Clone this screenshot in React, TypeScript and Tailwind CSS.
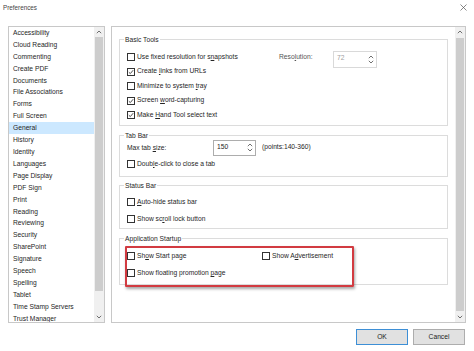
import { ReactNode } from "react";

const categories = [
  "Accessibility",
  "Cloud Reading",
  "Commenting",
  "Create PDF",
  "Documents",
  "File Associations",
  "Forms",
  "Full Screen",
  "General",
  "History",
  "Identity",
  "Languages",
  "Page Display",
  "PDF Sign",
  "Print",
  "Reading",
  "Reviewing",
  "Security",
  "SharePoint",
  "Signature",
  "Speech",
  "Spelling",
  "Tablet",
  "Time Stamp Servers",
  "Trust Manager",
];

function Chevron({ up }: { up?: boolean }) {
  return (
    <svg width="6" height="4" viewBox="0 0 6 4" className="block">
      <path
        d={up ? "M0.8 3.2 L3 1 L5.2 3.2" : "M0.8 0.8 L3 3 L5.2 0.8"}
        fill="none"
        stroke="#606060"
        strokeWidth="0.9"
      />
    </svg>
  );
}

function CheckBox({ checked }: { checked?: boolean }) {
  return (
    <span className="flex h-[8px] w-[8px] shrink-0 items-center justify-center border border-[#333] bg-white">
      {checked && (
        <svg width="6" height="6" viewBox="0 0 6 6">
          <path d="M0.8 3.2 L2.3 4.6 L5.2 1.2" fill="none" stroke="#222" strokeWidth="0.8" />
        </svg>
      )}
    </span>
  );
}

function Option({ checked, children }: { checked?: boolean; children: ReactNode }) {
  return (
    <div className="flex h-[12px] items-center gap-[2px]">
      <CheckBox checked={checked} />
      <span className="whitespace-nowrap">{children}</span>
    </div>
  );
}

function ScrollBar({ before, thumb }: { before: number; thumb: number }) {
  return (
    <div className="flex w-[10px] shrink-0 flex-col bg-[#f0f0f0]">
      <div className="flex h-[10px] items-center justify-center">
        <Chevron up />
      </div>
      <div className="flex flex-1 flex-col">
        <div style={{ height: before }} />
        <div className="mx-[1px] bg-[#cdcdcd]" style={{ height: thumb }} />
      </div>
      <div className="flex h-[10px] items-center justify-center">
        <Chevron />
      </div>
    </div>
  );
}

function GroupBox({ title, className, children }: { title: string; className: string; children?: ReactNode }) {
  return (
    <div className={`relative shrink-0 border border-[#dcdcdc] ${className}`}>
      <span className="absolute -top-[5px] left-[4px] bg-white px-[1px] leading-[9px]">{title}</span>
      {children}
    </div>
  );
}

function SpinBox({ value, disabled, className }: { value: string; disabled?: boolean; className: string }) {
  return (
    <div className={`flex shrink-0 justify-between border bg-white pl-[3px] pr-[2px] ${className}`}>
      <span className={`pt-[1px] leading-[9px] ${disabled ? "text-[#a0a0a0]" : "text-[#222]"}`}>{value}</span>
      <div className="flex flex-col justify-center gap-[1px]">
        <Chevron up />
        <Chevron />
      </div>
    </div>
  );
}

export default function App() {
  return (
    <div className="flex h-[351px] w-[474px] flex-col bg-white font-['Liberation_Sans',Arial,sans-serif] text-[6.7px] text-[#262626]">
      <div className="flex h-[26px] items-start justify-between pl-[3px] pr-[7px] pt-[3px]">
        <span className="text-[6.3px] leading-[9px] text-[#444]">Preferences</span>
        <svg width="7" height="7" viewBox="0 0 7 7" className="mt-[1px]">
          <path d="M0.5 0.5 L6.5 6.5 M6.5 0.5 L0.5 6.5" stroke="#555" strokeWidth="0.7" />
        </svg>
      </div>

      <div className="flex h-[297px] gap-[6px] pl-[8px] pr-[8px]">
        <div className="flex w-[97px] shrink-0 border border-[#c8c8c8]">
          <ul className="flex-1 overflow-hidden">
            {categories.map((c) => (
              <li
                key={c}
                className={`flex h-[11.92px] items-center whitespace-nowrap pl-[4px] ${c === "General" ? "bg-[#cce8ff]" : ""}`}
              >
                {c}
              </li>
            ))}
          </ul>
          <ScrollBar before={0} thumb={254} />
        </div>

        <div className="flex flex-1 border border-[#c8c8c8]">
          <div className="flex flex-1 flex-col pl-[7px] pr-[7px] pt-[12px]">
            <GroupBox title="Basic Tools" className="h-[87px]">
              <div className="flex flex-col gap-[2.5px] pl-[7px] pt-[11px]">
                <div className="flex h-[12px] items-center">
                  <div className="w-[152px]">
                    <Option>
                      Use fixed resolution for s<u>n</u>apshots
                    </Option>
                  </div>
                  <span className="w-[54px] text-[#555]">
                    Reso<u>l</u>ution:
                  </span>
                  <SpinBox value="72" disabled className="mt-[5px] h-[17px] w-[44px] border-[#d9d9d9]" />
                </div>
                <Option checked>
                  Create <u>l</u>inks from URLs
                </Option>
                <Option>
                  Minimize to system <u>t</u>ray
                </Option>
                <Option checked>
                  Screen <u>w</u>ord-capturing
                </Option>
                <Option checked>
                  Make <u>H</u>and Tool select text
                </Option>
              </div>
            </GroupBox>

            <GroupBox title="Tab Bar" className="mt-[9px] h-[42px]">
              <div className="flex flex-col pl-[7px] pt-[4px]">
                <div className="flex h-[15px] items-center">
                  <span className="w-[86px] pt-[2px]">
                    Max tab <u>s</u>ize:
                  </span>
                  <SpinBox value="150" className="h-[16px] w-[43px] border-[#adadad]" />
                  <span className="pl-[6px]">(points:140-360)</span>
                </div>
                <div className="mt-[3px]">
                  <Option>
                    Doub<u>l</u>e-click to close a tab
                  </Option>
                </div>
              </div>
            </GroupBox>

            <GroupBox title="Status Bar" className="mt-[8px] h-[44px]">
              <div className="flex flex-col gap-[5px] pl-[7px] pt-[10px]">
                <Option>
                  <u>A</u>uto-hide status bar
                </Option>
                <Option>
                  Show sc<u>r</u>oll lock button
                </Option>
              </div>
            </GroupBox>

            <GroupBox title="Application Startup" className="mt-[9px] h-[47px]">
              <div className="flex flex-col gap-[5px] pl-[7px] pt-[11px]">
                <div className="flex">
                  <div className="w-[135px]">
                    <Option>
                      Sh<u>o</u>w Start page
                    </Option>
                  </div>
                  <Option>
                    Show A<u>d</u>vertisement
                  </Option>
                </div>
                <Option>
                  Show floating promotion <u>p</u>age
                </Option>
              </div>
              <div className="absolute left-[5px] top-[7px] h-[41px] w-[229px] rounded-[1px] border-2 border-[#d23b41] shadow-[1px_2px_3px_rgba(0,0,0,0.35)]" />
            </GroupBox>
          </div>
          <ScrollBar before={1} thumb={273} />
        </div>
      </div>

      <div className="flex justify-end gap-[5px] pr-[9px] pt-[6px]">
        <button className="flex h-[16px] w-[52px] items-center justify-center border border-[#3d8fd6] bg-[#e1e1e1] text-[#222]">
          OK
        </button>
        <button className="flex h-[16px] w-[52px] items-center justify-center border border-[#adadad] bg-[#e1e1e1] text-[#222]">
          Cancel
        </button>
      </div>
    </div>
  );
}
